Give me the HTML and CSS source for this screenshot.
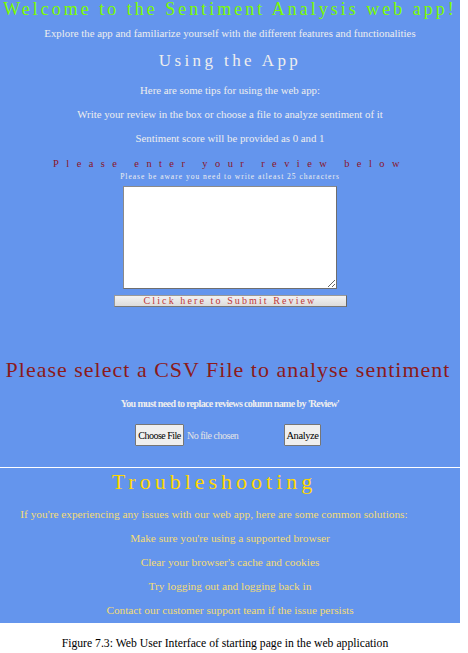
FILE: index.html
```html
<!DOCTYPE html>
<html>
<head>
<meta charset="utf-8">
<link rel="stylesheet" href="styles.css">
</head>
<body>
<div class="panel">
  <h1 class="title">Welcome to the Sentiment Analysis web app!</h1>
  <p class="note first">Explore the app and familiarize yourself with the different features and functionalities</p>
  <h2 class="using">Using the App</h2>
  <p class="note tips">Here are some tips for using the web app:</p>
  <p class="note">Write your review in the box or choose a file to analyze sentiment of it</p>
  <p class="note">Sentiment score will be provided as 0 and 1</p>
  <h3 class="enter">Please enter your review below</h3>
  <p class="aware">Please be aware you need to write atleast 25 characters</p>
  <textarea class="review"></textarea>
  <button class="submit">Click here to Submit Review</button>
  <h2 class="csv">Please select a CSV File to analyse sentiment</h2>
  <p class="must">You must need to replace reviews column name by 'Review'</p>
  <div class="filerow">
    <div class="picker">
      <button class="choose">Choose File</button>
      <span class="nofile">No file chosen</span>
    </div>
    <button class="analyze">Analyze</button>
  </div>
  <hr class="rule">
  <h2 class="trouble">Troubleshooting</h2>
  <p class="tip lead">If you're experiencing any issues with our web app, here are some common solutions:</p>
  <p class="tip">Make sure you're using a supported browser</p>
  <p class="tip">Clear your browser's cache and cookies</p>
  <p class="tip">Try logging out and logging back in</p>
  <p class="tip">Contact our customer support team if the issue persists</p>
</div>
<p class="caption">Figure 7.3: Web User Interface of starting page in the web application</p>
</body>
</html>
```
FILE: styles.css
```css
html, body {
  margin: 0;
  padding: 0;
  background: #ffffff;
  font-family: "Liberation Serif", "Times New Roman", serif;
}
.panel {
  width: 460px;
  height: 623px;
  background: #6495ed;
  overflow: hidden;
  text-align: center;
  display: flex;
  flex-direction: column;
  align-items: center;
}
.panel > * {
  margin: 0;
  flex: none;
}
.title {
  margin-top: -1px;
  font-size: 18px;
  line-height: 20px;
  font-weight: normal;
  letter-spacing: 3px;
  color: #7cfc00;
  white-space: nowrap;
}
.note {
  font-size: 10.8px;
  line-height: 24px;
  color: #eeeeee;
  white-space: nowrap;
}
.note.first { margin-top: 2px; }
.using {
  margin-top: 4px;
  font-size: 17px;
  line-height: 24px;
  font-weight: normal;
  letter-spacing: 3.4px;
  color: #eeeeee;
}
.note.tips { margin-top: 5px; }
.enter {
  margin-top: 7px;
  font-size: 10.5px;
  line-height: 14px;
  font-weight: normal;
  letter-spacing: 7.4px;
  color: #8b1428;
  white-space: nowrap;
}
.aware {
  margin-top: 1px;
  font-size: 7.5px;
  line-height: 9px;
  letter-spacing: 1px;
  color: #eeeeee;
  white-space: nowrap;
}
.review {
  margin-top: 5px;
  width: 214px;
  height: 103px;
  box-sizing: border-box;
  border: 1px solid #8a8a8a;
  border-right-color: #6e6e6e;
  border-bottom-color: #6e6e6e;
  background: #ffffff;
  padding: 2px;
  font-family: inherit;
}
.submit {
  margin-top: 6px;
  width: 233px;
  height: 12px;
  box-sizing: border-box;
  padding: 0;
  border: 1px solid #999999;
  border-right-color: #666666;
  border-bottom-color: #777777;
  background: linear-gradient(#f2f2f2, #dcdcdc);
  font-family: inherit;
  font-size: 10px;
  line-height: 10px;
  letter-spacing: 2.1px;
  color: #c03838;
  white-space: nowrap;
}
.csv {
  margin-top: 50px;
  font-size: 22px;
  line-height: 26px;
  font-weight: normal;
  letter-spacing: 1px;
  color: #8b1a1a;
  white-space: nowrap;
  padding-right: 4px;
}
.must {
  margin-top: 14px;
  font-size: 10px;
  line-height: 14px;
  font-weight: bold;
  letter-spacing: -0.63px;
  color: #eeeeee;
  white-space: nowrap;
}
.filerow {
  margin-top: 13px;
  align-self: stretch;
  display: flex;
  align-items: center;
  padding-left: 135px;
}
.picker {
  display: flex;
  align-items: center;
  gap: 3px;
  width: 149px;
}
.choose, .analyze {
  height: 22px;
  box-sizing: border-box;
  padding: 0;
  border: 1px solid #767676;
  border-radius: 1px;
  background: #efefef;
  font-family: inherit;
  font-size: 10.5px;
  letter-spacing: -0.4px;
  color: #000000;
  white-space: nowrap;
}
.choose { width: 49px; font-size: 10px; letter-spacing: -0.5px; }
.analyze { width: 37px; }
.nofile {
  font-size: 10px;
  letter-spacing: -0.5px;
  color: #e4e4e4;
  white-space: nowrap;
}
.rule {
  margin-top: 21px;
  align-self: stretch;
  height: 0;
  border: 0;
  border-top: 1px solid #ffffff;
}
.trouble {
  margin-top: 1px;
  padding-right: 32px;
  font-size: 22px;
  line-height: 26px;
  font-weight: normal;
  letter-spacing: 4px;
  color: #ffd700;
}
.tip {
  font-size: 11.3px;
  line-height: 24px;
  color: #f3dc74;
  white-space: nowrap;
}
.tip.lead {
  margin-top: 7px;
  padding-right: 32px;
}
.caption {
  margin: 0;
  width: 450px;
  text-align: center;
  font-size: 11.7px;
  line-height: 14px;
  padding-top: 14px;
  color: #000000;
}
```
